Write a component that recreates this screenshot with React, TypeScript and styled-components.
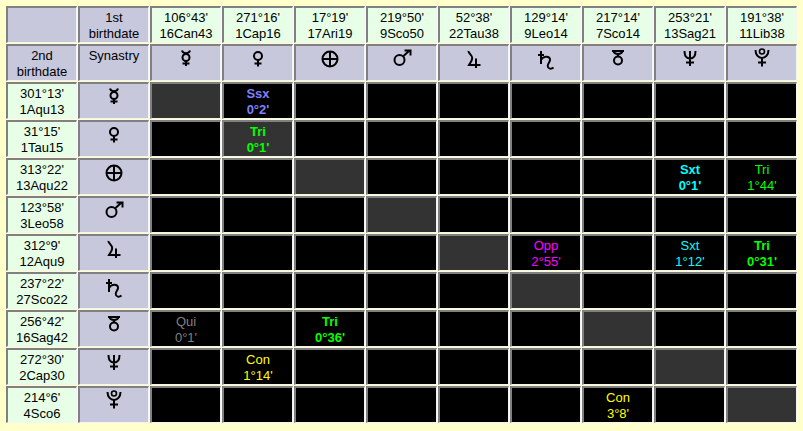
import styled, { createGlobalStyle } from "styled-components";

const GlobalStyle = createGlobalStyle`
  html, body {
    margin: 0;
    background: #ffffcc;
  }
  body {
    padding: 5px;
    font-family: "Liberation Sans", Arial, sans-serif;
    font-size: 13px;
    line-height: 16px;
    color: #000;
  }
`;

const Table = styled.table`
  border-collapse: separate;
  border-spacing: 1px;
  table-layout: fixed;
  width: 793px;
`;

const Cell = styled.td<{ $tone: "head" | "pos" | "empty" | "self" }>`
  box-sizing: border-box;
  width: 71px;
  height: 37px;
  padding: 2px 0 0;
  text-align: center;
  vertical-align: top;
  border-style: solid;
  border-width: 2px 1px 1px 2px;
  border-color: #808080 #f4f4f4 #f4f4f4 #808080;
  background: ${(props) =>
    props.$tone === "head"
      ? "#c8c8dc"
      : props.$tone === "pos"
        ? "#e6ffe6"
        : props.$tone === "self"
          ? "#333333"
          : "#000000"};
`;

const Aspect = styled.div<{ $color: string; $bold: boolean }>`
  color: ${(props) => props.$color};
  font-weight: ${(props) => (props.$bold ? "bold" : "normal")};
`;

const Glyph = styled.svg`
  display: block;
  width: 24px;
  height: 24px;
  margin: 0 auto;
  fill: none;
  stroke: #000;
  stroke-width: 2;
`;

type Planet = { name: string; draw: React.ReactElement };

const planets: Planet[] = [
  {
    name: "mercury",
    draw: (
      <>
        <path d="M8.500 2.500c1 3.500 7 3.500 8 0" />
        <circle cx="12.500" cy="9.500" r="3.500" />
        <path d="M12.500 13v5M9 15.500h7" />
      </>
    ),
  },
  {
    name: "venus",
    draw: (
      <>
        <circle cx="12.500" cy="8" r="4" />
        <path d="M12.500 12v6.500M9 15.500h7" />
      </>
    ),
  },
  {
    name: "earth",
    draw: (
      <>
        <circle cx="12.500" cy="11" r="7.500" />
        <path d="M12.500 3.500v15M5 11h15" />
      </>
    ),
  },
  {
    name: "mars",
    draw: (
      <>
        <circle cx="10" cy="12" r="5" />
        <path d="M14 8l6-5.500M15 2.500h6v5" />
      </>
    ),
  },
  {
    name: "jupiter",
    draw: (
      <path d="M7 3c-.5 2 4 4 3.700 7.300-.2 2.500-2 4.500-3.200 6.700H19M14.500 10.500V20" />
    ),
  },
  {
    name: "saturn",
    draw: (
      <path d="M7.500 3v13M4.500 7h6M7.500 12c2-4 8-4.500 9-1 .7 2.500-2.500 4.500-2.300 7 .2 3 3.500 3.500 5.800 1.500" />
    ),
  },
  {
    name: "uranus",
    draw: (
      <>
        <path d="M6.500 3h12M8 3c1 4 8 4 9 0M12.500 6v2" />
        <circle cx="12.500" cy="12.500" r="4" />
      </>
    ),
  },
  {
    name: "neptune",
    draw: (
      <path d="M7 3c0 6 2 7.500 5.500 7.500S18 9 18 3M12.500 3v15M8.500 14.500h8" />
    ),
  },
  {
    name: "pluto",
    draw: (
      <>
        <path d="M6 2c0 10.500 13 10.500 13 0M12.500 10v8.500M8.500 14.500h8" />
        <circle cx="12.500" cy="3.500" r="2.500" strokeWidth="1.600" />
      </>
    ),
  },
];

const first = [
  ["106°43'", "16Can43"],
  ["271°16'", "1Cap16"],
  ["17°19'", "17Ari19"],
  ["219°50'", "9Sco50"],
  ["52°38'", "22Tau38"],
  ["129°14'", "9Leo14"],
  ["217°14'", "7Sco14"],
  ["253°21'", "13Sag21"],
  ["191°38'", "11Lib38"],
];

const second = [
  ["301°13'", "1Aqu13"],
  ["31°15'", "1Tau15"],
  ["313°22'", "13Aqu22"],
  ["123°58'", "3Leo58"],
  ["312°9'", "12Aqu9"],
  ["237°22'", "27Sco22"],
  ["256°42'", "16Sag42"],
  ["272°30'", "2Cap30"],
  ["214°6'", "4Sco6"],
];

const colors: Record<string, string> = {
  Ssx: "#8080ff",
  Tri: "#00ff00",
  Sxt: "#00ffff",
  Opp: "#ff00ff",
  Qui: "#808080",
  Con: "#ffff00",
};

// "row-col": [aspect, orb, bold]
const aspects: Record<string, [string, string, boolean]> = {
  "0-1": ["Ssx", "0°2'", true],
  "1-1": ["Tri", "0°1'", true],
  "2-7": ["Sxt", "0°1'", true],
  "2-8": ["Tri", "1°44'", false],
  "4-5": ["Opp", "2°55'", false],
  "4-7": ["Sxt", "1°12'", false],
  "4-8": ["Tri", "0°31'", true],
  "6-0": ["Qui", "0°1'", false],
  "6-2": ["Tri", "0°36'", true],
  "7-1": ["Con", "1°14'", false],
  "8-6": ["Con", "3°8'", false],
};

function PlanetGlyph({ planet }: { planet: Planet }) {
  return (
    <Glyph viewBox="0.5 0 24 24" role="img" aria-label={planet.name}>
      {planet.draw}
    </Glyph>
  );
}

export default function App() {
  return (
    <>
      <GlobalStyle />
      <Table>
        <tbody>
          <tr>
            <Cell $tone="head" />
            <Cell $tone="head">
              1st
              <br />
              birthdate
            </Cell>
            {first.map((pos) => (
              <Cell $tone="pos" key={pos[1]}>
                {pos[0]}
                <br />
                {pos[1]}
              </Cell>
            ))}
          </tr>
          <tr>
            <Cell $tone="head">
              2nd
              <br />
              birthdate
            </Cell>
            <Cell $tone="head">Synastry</Cell>
            {planets.map((planet) => (
              <Cell $tone="head" key={planet.name}>
                <PlanetGlyph planet={planet} />
              </Cell>
            ))}
          </tr>
          {second.map((pos, row) => (
            <tr key={pos[1]}>
              <Cell $tone="pos">
                {pos[0]}
                <br />
                {pos[1]}
              </Cell>
              <Cell $tone="head">
                <PlanetGlyph planet={planets[row]} />
              </Cell>
              {planets.map((planet, col) => {
                const aspect = aspects[`${row}-${col}`];
                return (
                  <Cell $tone={row === col ? "self" : "empty"} key={planet.name}>
                    {aspect && (
                      <Aspect $color={colors[aspect[0]]} $bold={aspect[2]}>
                        {aspect[0]}
                        <br />
                        {aspect[1]}
                      </Aspect>
                    )}
                  </Cell>
                );
              })}
            </tr>
          ))}
        </tbody>
      </Table>
    </>
  );
}
